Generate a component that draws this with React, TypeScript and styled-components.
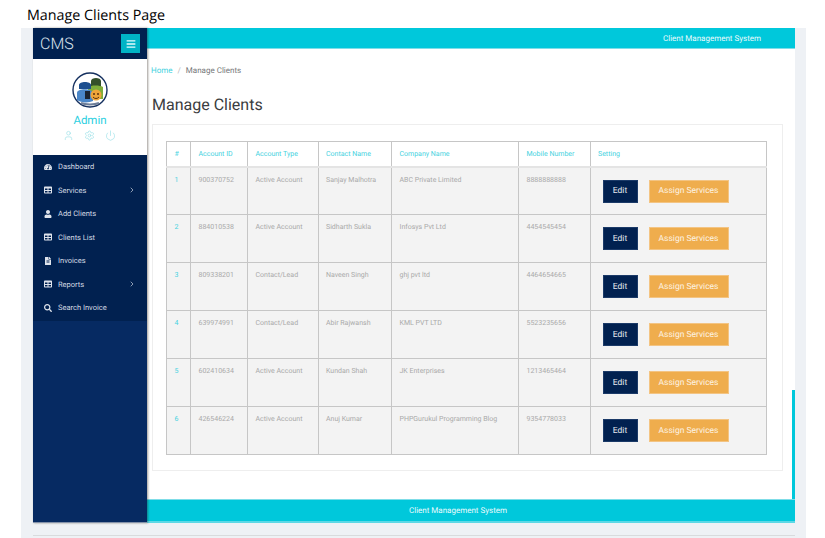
import React from 'react';
import styled, { createGlobalStyle } from 'styled-components';
import { ChevronRight, Power, Settings, User } from 'lucide-react';
import { FaBars, FaFileAlt, FaSearch, FaTable, FaTachometerAlt, FaUser } from 'react-icons/fa';

const GlobalStyle = createGlobalStyle`
  html, body {
    margin: 0;
    padding: 0;
    background: #fff;
    overflow: hidden;
  }
  * {
    box-sizing: border-box;
  }
`;

const Page = styled.div`
  width: 825px;
  height: 538px;
  display: flex;
  flex-direction: column;
  font-family: Roboto, "Liberation Sans", sans-serif;
  text-rendering: geometricPrecision;
  overflow: hidden;
`;

const PageCaption = styled.div`
  height: 28px;
  padding: 6px 0 0 27px;
  font-family: "Open Sans", sans-serif;
  font-size: 14.3px;
  line-height: 19px;
  color: #000;
`;

const Frame = styled.div`
  flex: 1;
  width: 785px;
  margin-left: 21px;
  padding: 0 11px 0 12px;
  background: #eef1f5;
`;

const Shell = styled.div`
  display: flex;
  height: 495px;
`;

const BottomRule = styled.div`
  height: 1px;
  margin-top: 12px;
  background: #d9dbdd;
`;

const Sidebar = styled.aside`
  width: 114px;
  flex-shrink: 0;
  z-index: 2;
  display: flex;
  flex-direction: column;
  background: #062a62;
  border-bottom: 1px solid #8492aa;
  box-shadow: 1px 0 2px rgba(40, 30, 20, 0.45);
`;

const Brand = styled.div`
  height: 31px;
  padding: 0 7px;
  display: flex;
  align-items: center;
  justify-content: space-between;
  background: #012150;
`;

const BrandName = styled.span`
  font-size: 16px;
  font-weight: 300;
  color: #dbe2ea;
`;

const MenuToggle = styled.div`
  width: 19px;
  height: 19px;
  display: flex;
  align-items: center;
  justify-content: center;
  background: #00b4c6;
  color: #e8fbfd;
  font-size: 10px;
`;

const Profile = styled.div`
  height: 96px;
  padding-top: 13px;
  display: flex;
  flex-direction: column;
  align-items: center;
  background: #fff;
`;

const AdminName = styled.div`
  margin-top: 5px;
  font-size: 11.5px;
  line-height: 14px;
  color: #2bcfdf;
`;

const ProfileActions = styled.div`
  margin-top: 3px;
  margin-right: 2px;
  display: flex;
  gap: 10px;
  color: #9adfe8;
`;

const Menu = styled.nav`
  height: 166px;
  background: #012150;
`;

const MenuItem = styled.div`
  height: 23.5px;
  padding: 0 11px 0 11px;
  display: flex;
  align-items: center;
  color: #d3d9e3;
  font-size: 7.5px;
  font-weight: 400;
`;

const MenuIcon = styled.span`
  width: 14px;
  display: flex;
  font-size: 8px;
  color: #dfe4ec;
`;

const MenuLabel = styled.span`
  flex: 1;
`;

const Main = styled.div`
  flex: 1;
  min-width: 0;
  display: flex;
  flex-direction: column;
`;

const TopBar = styled.header`
  height: 21px;
  padding-right: 34px;
  display: flex;
  align-items: center;
  justify-content: flex-end;
  background: #00c8db;
  border-bottom: 1px solid #7fdde8;
  color: #e8fbfd;
  font-size: 8px;
`;

const Content = styled.main`
  flex: 1;
  position: relative;
  padding: 16px 12px 0 4px;
  background: #fff;
`;

const ScrollEdge = styled.div`
  position: absolute;
  right: 0;
  bottom: 0;
  width: 3px;
  height: 109px;
  background: #00c8db;
`;

const Breadcrumb = styled.div`
  display: flex;
  gap: 5px;
  font-size: 8px;
  line-height: 12px;
  color: #b5b5b5;
`;

const Crumb = styled.span<{ $active?: boolean }>`
  color: ${(p) => (p.$active ? '#76777a' : '#45d2e0')};
`;

const Heading = styled.h1`
  margin: 18px 0 0 1px;
  font-size: 16px;
  line-height: 20px;
  font-weight: 400;
  color: #3b3d40;
`;

const Card = styled.section`
  margin: 9px 0 0 1px;
  height: 347px;
  padding: 16px 15px 0 13px;
  border: 1px solid #eeeeee;
`;

const Table = styled.table`
  width: 600px;
  table-layout: fixed;
  border-collapse: collapse;
  border: 1px solid #c6c6c6;
  font-size: 7px;
`;

const HeadCell = styled.th<{ $w: number }>`
  width: ${(p) => p.$w}px;
  height: 25px;
  padding: 0 0 0 7.5px;
  border: 1px solid #c6c6c6;
  border-bottom: 2px solid #e4e4e4;
  background: #fff;
  color: #45d2e0;
  font-weight: 400;
  text-align: left;
`;

const Row = styled.tr`
  height: 48px;
  background: #f3f3f3;
`;

const Cell = styled.td<{ $accent?: boolean }>`
  padding: 8px 0 0 7.5px;
  border: 1px solid #c6c6c6;
  vertical-align: top;
  line-height: 9px;
  color: ${(p) => (p.$accent ? '#45d2e0' : '#a9a9a9')};
`;

const ActionCell = styled.td`
  padding: 12px 0 0 12px;
  border: 1px solid #c6c6c6;
  vertical-align: top;
`;

const Actions = styled.div`
  display: flex;
  gap: 11px;
`;

const Button = styled.div<{ $wide?: boolean }>`
  width: ${(p) => (p.$wide ? '80px' : '35px')};
  height: 23px;
  display: flex;
  align-items: center;
  justify-content: center;
  background: ${(p) => (p.$wide ? '#efad4d' : '#012150')};
  border: 1px solid ${(p) => (p.$wide ? '#f3c483' : '#1b3a68')};
  color: ${(p) => (p.$wide ? '#fdf3e3' : '#e6e9ef')};
  font-size: 8.5px;
`;

const Footer = styled.footer`
  height: 24px;
  padding-right: 26px;
  display: flex;
  align-items: center;
  justify-content: center;
  background: #00c8db;
  border-top: 1px solid #7fdde8;
  border-bottom: 2px solid #5cd8e6;
  color: #e8fbfd;
  font-size: 8px;
`;

const Avatar = () => (
  <svg width="36" height="36" viewBox="0 0 36 36">
    <circle cx="18" cy="18" r="17" fill="#fff" stroke="#15305f" strokeWidth="1.4" />
    <path d="M19 9c0-4 10-4 10 0v6H19z" fill="#33502a" />
    <path d="M16 15c3-2 12-2 15 0v12H16z" fill="#7fae3a" />
    <path d="M7 13c0-4 12-4 12 0v4H7z" fill="#1d4f8f" />
    <path d="M5 21c0-5 15-5 16 0v8c-4 2-12 2-16-1z" fill="#4a86c8" />
    <rect x="13" y="19" width="5" height="8" fill="#1c2430" />
    <circle cx="24" cy="23" r="5.500" fill="#eea53a" />
    <circle cx="22" cy="22" r="1" fill="#5a3210" />
    <circle cx="26" cy="22" r="1" fill="#5a3210" />
    <path d="M21 25c1.500 2 4.500 2 6 0" fill="none" stroke="#5a3210" strokeWidth="1" />
    <path d="M9 31c5 2 13 2 18 0" fill="none" stroke="#6f7f99" strokeWidth="2" />
  </svg>
);

const menuItems = [
  { icon: <FaTachometerAlt />, label: 'Dashboard' },
  { icon: <FaTable />, label: 'Services', more: true },
  { icon: <FaUser />, label: 'Add Clients' },
  { icon: <FaTable />, label: 'Clients List' },
  { icon: <FaFileAlt />, label: 'Invoices' },
  { icon: <FaTable />, label: 'Reports', more: true },
  { icon: <FaSearch />, label: 'Search Invoice' },
];

const columns = [
  { title: '#', width: 24 },
  { title: 'Account ID', width: 57 },
  { title: 'Account Type', width: 70.5 },
  { title: 'Contact Name', width: 73.5 },
  { title: 'Company Name', width: 127 },
  { title: 'Mobile Number', width: 71.5 },
  { title: 'Setting', width: 176.5 },
];

const clients = [
  ['900370752', 'Active Account', 'Sanjay Malhotra', 'ABC Private Limited', '8888888888'],
  ['884010538', 'Active Account', 'Sidharth Sukla', 'Infosys Pvt Ltd', '4454545454'],
  ['809338201', 'Contact/Lead', 'Naveen Singh', 'ghj pvt ltd', '4464654665'],
  ['639974991', 'Contact/Lead', 'Abir Rajwansh', 'KML PVT LTD', '5523235656'],
  ['602410634', 'Active Account', 'Kundan Shah', 'JK Enterprises', '1213465464'],
  ['426546224', 'Active Account', 'Anuj Kumar', 'PHPGurukul Programming Blog', '9354778033'],
];

const App: React.FC = () => (
  <Page>
    <GlobalStyle />
    <PageCaption>Manage Clients Page</PageCaption>
    <Frame>
      <Shell>
        <Sidebar>
          <Brand>
            <BrandName>CMS</BrandName>
            <MenuToggle>
              <FaBars />
            </MenuToggle>
          </Brand>
          <Profile>
            <Avatar />
            <AdminName>Admin</AdminName>
            <ProfileActions>
              <User size={11} strokeWidth={1.4} />
              <Settings size={11} strokeWidth={1.4} />
              <Power size={11} strokeWidth={1.4} />
            </ProfileActions>
          </Profile>
          <Menu>
            {menuItems.map((item) => (
              <MenuItem key={item.label}>
                <MenuIcon>{item.icon}</MenuIcon>
                <MenuLabel>{item.label}</MenuLabel>
                {item.more && <ChevronRight size={8} />}
              </MenuItem>
            ))}
          </Menu>
        </Sidebar>
        <Main>
          <TopBar>Client Management System</TopBar>
          <Content>
            <Breadcrumb>
              <Crumb>Home</Crumb>
              <span>/</span>
              <Crumb $active>Manage Clients</Crumb>
            </Breadcrumb>
            <Heading>Manage Clients</Heading>
            <Card>
              <Table>
                <thead>
                  <tr>
                    {columns.map((col) => (
                      <HeadCell key={col.title} $w={col.width}>
                        {col.title}
                      </HeadCell>
                    ))}
                  </tr>
                </thead>
                <tbody>
                  {clients.map((client, index) => (
                    <Row key={client[0]}>
                      <Cell $accent>{index + 1}</Cell>
                      {client.map((value) => (
                        <Cell key={value}>{value}</Cell>
                      ))}
                      <ActionCell>
                        <Actions>
                          <Button>Edit</Button>
                          <Button $wide>Assign Services</Button>
                        </Actions>
                      </ActionCell>
                    </Row>
                  ))}
                </tbody>
              </Table>
            </Card>
            <ScrollEdge />
          </Content>
          <Footer>Client Management System</Footer>
        </Main>
      </Shell>
      <BottomRule />
    </Frame>
  </Page>
);

export default App;
